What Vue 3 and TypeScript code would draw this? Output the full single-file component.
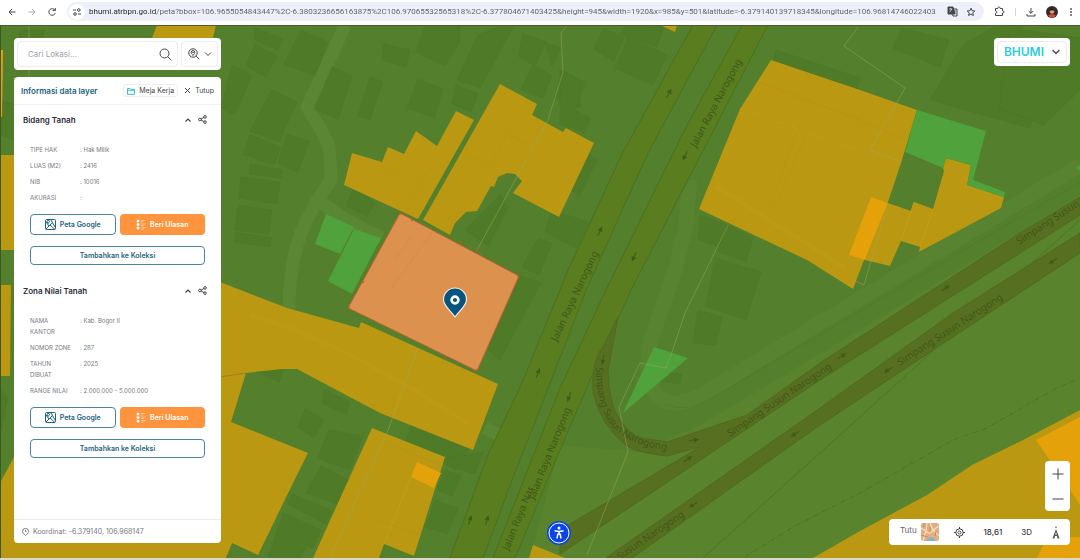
<script setup lang="ts">
import { ref } from 'vue'

interface Field { label: string; value: string }
interface Section { title: string; fields: Field[] }
interface Label { text: string; x: number; y: number; angle: number; anchor: 'start' | 'end' }

const address = ref('bhumi.atrbpn.go.id/peta?bbox=106.9655054843447%2C-6.3803236656163875%2C106.97065532565318%2C-6.377804671403425&height=945&width=1920&x=985&y=501&latitude=-6.379140139718345&longitude=106.96814746022403')
const query = ref('')

const sections: Section[] = [
  {
    title: 'Bidang Tanah',
    fields: [
      { label: 'TIPE HAK', value: 'Hak Milik' },
      { label: 'LUAS (M2)', value: '2416' },
      { label: 'NIB', value: '10016' },
      { label: 'AKURASI', value: '' },
    ],
  },
  {
    title: 'Zona Nilai Tanah',
    fields: [
      { label: 'NAMA KANTOR', value: 'Kab. Bogor II' },
      { label: 'NOMOR ZONE', value: '287' },
      { label: 'TAHUN DIBUAT', value: '2025' },
      { label: 'RANGE NILAI', value: '2.000.000 - 5.000.000' },
    ],
  },
]

const buildings: string[] = [
  '256,28 283,39 278,50 254,39', '255,44 277,56 266,77 246,66', '301,30 328,42 315,76 284,64',
  '232,65 252,75 235,115 221,108', '272,90 297,102 279,142 250,131', '250,135 281,147 274,165 243,154',
  '287,134 309,141 298,172 278,163', '250,164 283,170 281,178 249,174', '241,177 280,182 277,204 239,198',
  '238,205 272,210 269,234 235,230', '236,232 272,238 270,247 235,242', '332,67 352,76 338,119 314,109',
  '370,77 383,82 370,120 358,116', '384,44 410,50 406,67 382,60', '425,25 460,25 460,42 445,66 416,52',
  '418,79 443,89 434,118 407,108', '478,35 503,25 514,25 480,88 457,80', '456,85 478,94 471,112 452,104',
  '523,34 546,42 535,66 518,56', '533,65 552,75 543,98 521,89', '545,42 561,48 552,66', '562,70 580,80 580,108 555,98',
  '603,28 624,38 614,61 594,49', '628,37 667,55 653,85 615,68', '626,25 664,25 657,47 620,34',
  '560,70 585,82 575,110 590,118 585,133 560,124', '587,153 597,160 579,197 572,190',
  '552,210 588,222 577,248 545,232', '538,238 552,243 539,275 522,267', '519,276 541,282 500,360 488,350',
  '355,185 375,204 367,216 346,206', '500,195 508,207 488,246 465,230', '776,50 860,78 857,90 773,60',
  '902,28 949,40 940,67 893,48', '962,46 997,25 1023,25 1008,60 1048,72 1030,128 930,100',
  '1010,28 1080,38 1080,90 1044,125 999,108', '700,215 727,225 720,247 698,240', '727,225 753,238 746,262 717,251',
  '715,258 761,272 746,320 706,306', '698,310 722,317 716,345 693,343', '255,355 285,365 279,382 253,370',
  '325,390 350,402 346,414 322,403', '305,409 324,420 314,438 298,427', '329,430 363,436 350,470 317,458',
  '321,466 349,480 337,504 306,493', '292,494 331,510 326,524 288,504', '283,513 321,530 313,548 276,535',
  '276,535 306,548 300,557 268,557', '411,425 470,447 456,470 405,443', '448,458 483,452 475,474 447,465',
  '445,470 461,476 452,496 437,490', '435,500 458,508 447,534 426,527', '645,370 682,374 680,384 650,380',
  '20,30 45,30 35,60 15,60', '1,100 14,105 14,140 1,135', '1,390 8,398 1,430',
]

const gold: string[] = [
  '157,25 216,25 213,38 152,38', '1,155 15,155 15,250 1,250', '1,285 11,285 10,376 1,376',
  '352,153 382,162 388,147 404,154 416,131 437,146 456,111 474,120 418,219 344,185',
  '500,84 537,104 532,115 563,132 566,128 594,143 559,217 513,193 522,181 515,174 507,173 498,177 494,187 491,186 477,211 466,212 455,223 450,235 423,220',
  '220,282 287,308 359,328 361,322 498,384 473,450 380,413 297,369 282,369 246,373 231,422 308,453 293,483 258,555 232,543 226,558 0,558 0,483 15,455 60,380 210,280',
  '372,428 445,457 414,556 384,544 379,558 313,558', '533,545 565,558 529,558',
  '771,60 860,90 917,110 901,163 888,202 864,260 853,289 807,260 699,209 740,109',
  '888,203 911,211 914,202 933,209 944,171 943,168 946,158 971,165 967,185 1004,197 1001,208 919,252 920,247 901,241 890,266 865,260',
  '660,25 677,25 675,32', '1080,410 1023,440 972,465 927,495 860,531 813,558 1080,558',
]
const orange: string[] = [
  '417,462 441,473 434,488 411,477', '871,197 888,203 865,260 849,255',
  '1080,417 1036,440 1072,493 1080,505', '1047,537 1080,537 1080,558 1037,558', '1,50 3,50 2,117 1,117',
]
const green: string[] = [
  '326,214 354,227 340,254 315,244', '354,229 381,238 352,294 328,281',
  '917,110 986,131 973,180 1005,192 1004,197 967,185 971,165 946,158 943,168 905,152',
  '654,347 688,358 623,413', '1080,165 1080,170 1076,168',
]

const labels: Label[] = [
  { text: 'Jalan Raya Narogong', x: 696, y: 148, angle: -62, anchor: 'start' },
  { text: 'Jalan Raya Narogong', x: 557, y: 342, angle: -65, anchor: 'start' },
  { text: 'Jalan Raya Narogong', x: 571, y: 409, angle: -68, anchor: 'end' },
  { text: 'Jalan Raya Nar', x: 534, y: 488, angle: -68, anchor: 'end' },
  { text: 'Simpang Susun Narogong', x: 730, y: 437, angle: -34, anchor: 'start' },
  { text: 'Simpang Susun Narogong', x: 900, y: 366, angle: -33, anchor: 'start' },
  { text: 'Simpang Susun', x: 1019, y: 245, angle: -33, anchor: 'start' },
  { text: 'Susun Narogong', x: 685, y: 516, angle: -34, anchor: 'end' },
]

const arrows: [number, number, number][] = [
  [669, 93, -62], [685, 156, 118], [600, 231, -66], [634, 257, 116], [538, 373, -68], [569, 397, 110],
  [470, 520, -72], [487, 520, -72], [603, 360, 100], [694, 440, -5], [688, 459, -33], [795, 434, 147],
  [693, 505, 147], [842, 356, -33], [888, 370, 147], [946, 288, -33], [1053, 261, 147],
]
</script>

<template>
  <div class="page">
    <header class="browser">
      <button class="chrome-btn" aria-label="Back"><svg width="10" height="10" viewBox="0 0 10 10"><path d="M8.500 5H2M5 2 2 5l3 3" /></svg></button>
      <button class="chrome-btn faded" aria-label="Forward"><svg width="10" height="10" viewBox="0 0 10 10"><path d="M1.500 5H8M5 2l3 3-3 3" /></svg></button>
      <button class="chrome-btn" aria-label="Reload"><svg width="10" height="10" viewBox="0 0 10 10"><path d="M8 3.300A3.300 3.300 0 1 0 8.300 6M8.300 1v2.600H5.700" /></svg></button>
      <div class="address">
        <button class="site-info" aria-label="Site information"><svg width="10" height="10" viewBox="0 0 10 10"><path d="M1 3h3M6 7h3" /><circle cx="6.800" cy="3" r="1.300" /><circle cx="3" cy="7" r="1.300" /></svg></button>
        <input v-model="address" class="url" aria-label="Address" spellcheck="false" />
        <button class="chrome-btn" aria-label="Translate"><svg width="11" height="11" viewBox="0 0 11 11"><path d="M1 1h5l2 7H1z" fill="#44474a" /><path d="M6 3h4v7H6L5 8" /><path d="M2.200 3h3M3.700 2.300V3M2.400 6Q4 5 4.600 3" stroke="#fff" stroke-width=".7" /><path d="M6.500 5h3M8 4.500c0 1-1 3-1.500 3.500M7.500 6l1.700 2" stroke-width=".6" /></svg></button>
        <button class="chrome-btn" aria-label="Bookmark"><svg width="10" height="10" viewBox="0 0 10 10"><path d="m5 1.200 1.100 2.500 2.700.3-2 1.800.6 2.700L5 7.100 2.600 8.500l.6-2.700-2-1.800 2.700-.3z" /></svg></button>
      </div>
      <div class="browser-tools">
        <button class="chrome-btn" aria-label="Extensions"><svg width="11" height="11" viewBox="0 0 11 11"><path d="M1.500 2.500h2.300c0-2 2.400-2 2.400 0h2.300v2.300c2 0 2 2.200 0 2.200v2.500h-7V7.400c1.700 0 1.700-2.400 0-2.400z" /></svg></button>
        <span class="divider"></span>
        <button class="chrome-btn" aria-label="Downloads"><svg width="10" height="10" viewBox="0 0 10 10"><path d="M5 1v5.200M2.700 4 5 6.300 7.300 4M1 7v2h8V7" /></svg></button>
        <button class="chrome-btn" aria-label="Profile"><svg width="12" height="12" viewBox="0 0 12 12"><g stroke="none"><circle cx="6" cy="6" r="6" fill="#382a2b" /><path d="M2 9.500Q6 6.500 10 9.500Q6 14 2 9.500" fill="#d8443a" /><circle cx="6" cy="5.400" r="2.300" fill="#d69b79" /><path d="M3.500 5Q4 2 6 2.500T8.500 5Q6 3.500 3.500 5" fill="#1d1718" /></g></svg></button>
        <button class="chrome-btn" aria-label="Menu"><svg width="6" height="10" viewBox="0 0 6 10"><g fill="#44474a" stroke="none"><circle cx="3" cy="2" r=".9" /><circle cx="3" cy="5" r=".9" /><circle cx="3" cy="8" r=".9" /></g></svg></button>
      </div>
    </header>

    <main class="stage">
      <svg class="map" viewBox="0 26 1080 532" preserveAspectRatio="xMidYMid slice" role="img" aria-label="Peta bidang tanah">
        <rect x="0" y="25" width="1080" height="533" fill="#547f2c" />
        <path d="M530 558 560 445 640 452 700 425 860 330 1080 195V558z" fill="#59842d" />
        <path d="M345 25Q325 70 307 107Q327 138 329 148Q332 177 330 182Q303 218 295 253Q289 280 289 310M316 198Q345 222 382 238" class="street" />
        <path d="M690 180 685 230 675 270 651 340Q640 385 663 401Q680 408 705 393L1080 165" class="street wide-street" />
        <path d="M485 428l20 10" class="street" />
        <polygon v-for="b in buildings" :key="b" :points="b" class="building" />
        <path d="M665 404Q688 414 712 398L1080 182" fill="none" stroke="#4e7928" opacity=".6" />

        <g class="road">
          <path d="M693 25 717 25 648 153 587 288 537 417 517 467 483 558 450 558 487 457 522 383 568 270 623 152z" />
          <path d="M742 25 768 25 707 143 632 288 593 373 560 450 515 558 493 558 560 388 607 288 683 133z" />
        </g>
        <g class="toll">
          <path d="M618 317 608 370Q609 401 617 415 628 434 642 438L667 442 747 415 820 363 1020 233 1080 197V215L820 380 560 554V530L700 447 667 456Q638 453 627 446 600 425 593 392 591 360 604 345z" />
          <path d="M606 558 820 408 953 313 1080 233V253L820 425 632 558z" />
        </g>
        <path d="M703 558 820 453 953 333 1080 220" fill="none" stroke="#4c7425" stroke-width="1" />
        <path d="M745 557 793 527 860 493 918 460 953 440 987 428 1053 390 1080 378" fill="none" stroke="#4a7222" stroke-dasharray="5 2 1 2" />

        <polygon v-for="p in gold" :key="p" :points="p" fill="#ba9812" />
        <polygon v-for="p in orange" :key="p" :points="p" fill="#e4a10a" />
        <polygon v-for="p in green" :key="p" :points="p" fill="#4fa23c" />
        <g fill="none" stroke="#a98d15" opacity=".3">
          <path d="M759 82 860 120 905 140M800 125 775 190M806 136 774 208M740 109 860 150M380 163 400 178M409 202 430 168M465 155l25 10 17-30 20 8M380 440 445 467M378 520 420 535" />
        </g>
        <path d="M715 186 845 268M250 315Q340 340 470 425" fill="none" stroke="#c29f1e" stroke-width="5" opacity=".35" />
        <path d="M220 377 246 373" fill="none" stroke="#9b8217" />
        <path d="M411 477 384 544M740 109 860 150M914 202 901 241M933 209 920 247" fill="none" stroke="#c9a01a" opacity=".7" />
        <g class="walls">
          <path d="M567 25 561 33 563 72 548 120 477 250M417 350 387 433 330 557M728 225 685 313 672 352 666 368 640 363 619 407 628 452 587 555M858 27 844 46 905 88 870 150 902 162M888 203 864 285 855 281M29 25V80" />
        </g>

        <polygon points="400,213 519,276 477,371 348,308" fill="#dc914f" stroke="#b9622b" stroke-width="1" />
        <path d="M432 232 390 290M412 235 395 260" stroke="#d78c4b" />
        <g fill="#d84c25"><circle v-for="[x, y] in [[400,214],[412,220],[461,242],[477,250],[518,276],[445,358],[477,370],[349,308],[363,282]]" :key="`${x}-${y}`" :cx="x" :cy="y" r="1" /></g>

        <g class="road-labels">
          <text v-for="(l, i) in labels" :key="i" :transform="`translate(${l.x} ${l.y}) rotate(${l.angle})`" :text-anchor="l.anchor">{{ l.text }}</text>
          <path id="ramp" d="M596 367Q596 409 615 430Q635 449 690 453" fill="none" />
          <text><textPath href="#ramp">Simpang Susun Narogong</textPath></text>
        </g>
        <g v-for="[x, y, a] in arrows" :key="`${x}-${y}`" :transform="`translate(${x} ${y}) rotate(${a})`">
          <path d="M-5 0H2" stroke="#3f5b18" /><path d="M0-2.500 5 0 0 2.500z" fill="#3f5b18" />
        </g>

        <path d="M455 317C450 310 443.500 306 443.500 299.500a11.500 11.500 0 0 1 23 0C466.500 306 460 310 455 317z" fill="#07547f" stroke="#f4ece4" stroke-width="1.200" />
        <circle cx="455" cy="300" r="3.400" fill="#07547f" stroke="#fff" stroke-width="2.600" />
        <path d="M.5 25V558" stroke="#3c5a20" />
      </svg>

      <aside class="side">
        <form class="search card" @submit.prevent>
          <div class="search-field">
            <input v-model="query" placeholder="Cari Lokasi..." aria-label="Cari Lokasi" />
            <button aria-label="Cari"><svg width="13" height="13" viewBox="0 0 13 13"><circle cx="5.500" cy="5.500" r="4.500" /><path d="m9 9 3.300 3.300" /></svg></button>
          </div>
          <button class="search-mode" type="button" aria-label="Mode pencarian">
            <svg width="12" height="12" viewBox="0 0 12 12"><circle cx="5" cy="5" r="4.200" /><path d="m8.200 8.200 3 3M5 7.500C4 6 3.200 5.500 3.200 4.400a1.800 1.800 0 0 1 3.600 0C6.800 5.500 6 6 5 7.500z" /><circle cx="5" cy="4.400" r=".4" /></svg>
            <svg width="8" height="8" viewBox="0 0 8 8"><path d="m1 2.500 3 3 3-3" /></svg>
          </button>
        </form>

        <section class="info card">
          <header class="info-head">
            <h1>Informasi data layer</h1>
            <button class="desk"><svg width="8" height="8" viewBox="0 0 8 8"><path d="M.5 1.500h2.500l.7.800H7.500v5h-7zM.5 3.300h7" stroke="#35bfcb" /></svg>Meja Kerja</button>
            <button class="close"><svg width="7" height="7" viewBox="0 0 7 7"><path d="m1 1 5 5M6 1 1 6" /></svg>Tutup</button>
          </header>
          <div class="info-body">
            <section v-for="s in sections" :key="s.title" class="block">
              <div class="block-head">
                <h2>{{ s.title }}</h2>
                <button aria-label="Ciutkan"><svg width="8" height="8" viewBox="0 0 8 8"><path d="m1.500 5.500 2.500-2.500 2.500 2.500" stroke-width="1.200" /></svg></button>
                <button aria-label="Bagikan"><svg width="9" height="9" viewBox="0 0 9 9"><circle cx="1.900" cy="4.500" r="1.300" /><circle cx="7" cy="1.900" r="1.300" /><circle cx="7" cy="7.100" r="1.300" /><path d="M3 4 5.900 2.500M3 5l2.900 1.500" /></svg></button>
              </div>
              <dl>
                <div v-for="f in s.fields" :key="f.label" class="field">
                  <dt>{{ f.label }}</dt><dd>: {{ f.value }}</dd>
                </div>
              </dl>
              <div class="actions">
                <button class="outline"><svg width="11" height="11" viewBox="0 0 11 11"><rect x=".5" y=".5" width="10" height="10" rx="1" /><path d="m1 10 7-7M5 6l5 4.500M1 3l3 4M6 1l4 7M3.200 1v1M2 2.500C2 1 4.500 1 4.500 2.500L3.200 4.500z" /></svg>Peta Google</button>
                <button class="solid"><svg width="10" height="11" viewBox="0 0 10 11"><g fill="#fff" stroke="none"><circle cx="2" cy="2" r="1.500" /><circle cx="2" cy="5.500" r="1.500" /><circle cx="2" cy="9" r="1.500" /></g><path d="M5 1.500h4M5 3h2.500M5 5h5M5 6.500h3M5 8.500h5M5 10h3" stroke="#ffe0bd" stroke-width=".6" /></svg>Beri Ulasan</button>
                <button class="outline wide">Tambahkan ke Koleksi</button>
              </div>
            </section>
          </div>
          <footer class="coords">
            <svg width="7" height="8" viewBox="0 0 7 8"><path d="M3.500 7.300C1.500 6 .5 5 .5 3.400a3 3 0 0 1 6 0C6.500 5 5.500 6 3.500 7.300z" /><path d="M3.500 2v1.700h1" /></svg>
            Koordinat: -6.379140, 106.968147
          </footer>
        </section>
      </aside>

      <button class="brand card" aria-label="BHUMI menu">
        <span class="brand-inner"><span class="logo">BHUMI</span><svg width="10" height="8" viewBox="0 0 10 8"><path d="m1.500 2 3.500 3.500L8.500 2" stroke-width="1.300" /></svg></span>
      </button>

      <button class="access" aria-label="Aksesibilitas">
        <svg width="24" height="24" viewBox="0 0 24 24"><circle cx="12" cy="12" r="12" fill="#0a45e8" stroke="none" /><circle cx="12" cy="12" r="10" stroke="#fff" stroke-width="1" /><circle cx="12" cy="7" r="1.500" fill="#fff" stroke="none" /><path d="M7.500 9.700 12 10.400l4.500-.7M12 10.400v3M10 17.500l.8-4.300h2.400L14 17.500" stroke="#fff" stroke-width="1.500" /></svg>
      </button>

      <div class="zoom card">
        <button aria-label="Perbesar"><svg width="12" height="12" viewBox="0 0 12 12"><path d="M6 .5v11M.5 6h11" /></svg></button>
        <button aria-label="Perkecil"><svg width="12" height="12" viewBox="0 0 12 12"><path d="M.5 6h11" /></svg></button>
      </div>

      <div class="tools card">
        <button class="tutu"><span>Tutu</span>
          <svg width="18" height="18" viewBox="0 0 18 18"><rect width="18" height="18" rx="2" fill="#e2ae82" stroke="none" /><path d="M5 18Q10 10 15 18z" fill="#86b5c0" stroke="none" /><path d="M0 5 5 8 6 0M5 8 2 18M18 3 12 7 9 0M12 7l6 6M5 8Q9 13 12 7" stroke="#f4dfc5" stroke-width="1.200" /><path d="M3 0v4M9 4v5M15 8l-1 5M0 12l7 2" stroke="#c97f55" stroke-width=".9" /></svg>
        </button>
        <button aria-label="Lokasi saya"><svg width="11" height="11" viewBox="0 0 11 11"><circle cx="5.500" cy="5.500" r="3.700" /><circle cx="5.500" cy="5.500" r="1.500" /><path d="M5.500 0v2M5.500 9v2M0 5.500h2M9 5.500h2" /></svg></button>
        <output class="level">18,61</output>
        <button>3D</button>
        <button aria-label="Utara"><svg width="10" height="13" viewBox="0 0 10 13"><path d="M5 0 6 2H4z" fill="#c44" stroke="none" /><path d="m5 3 3.500 9.500H6.500L6 10H4l-.5 2.500h-2z" fill="#555" stroke="none" /><path d="m5 6 .8 2.500H4.200z" fill="#fff" stroke="none" /></svg></button>
      </div>
    </main>
  </div>
</template>

<style>
body { margin: 0; }
</style>

<style scoped>
.page { height: 100vh; display: flex; flex-direction: column; background: #d9d8c9; font-family: Inter, "Liberation Sans", sans-serif; color: #444; }
button { border: 0; padding: 0; margin: 0; background: none; font: inherit; color: inherit; display: flex; align-items: center; justify-content: center; cursor: pointer; }
svg { fill: none; stroke: currentColor; stroke-width: 1; flex: none; }
h1, h2, dl, dd { margin: 0; }

.browser { display: flex; align-items: center; height: 26px; flex: none; padding: 0 6px 2px 7px; background: #fff; color: #44474a; border-bottom: 1px solid #4b5c35; box-sizing: border-box; gap: 10px; }
.browser .chrome-btn { flex: none; }
.browser .faded { color: #aaadb0; }
.address { flex: 1; display: flex; align-items: center; gap: 8px; height: 19px; border-radius: 10px; background: #edf0f9; padding: 0 8px 0 2px; min-width: 0; }
.address .site-info { width: 16px; height: 16px; border-radius: 8px; background: #fff; flex: none; }
.url { flex: 1; min-width: 0; border: 0; outline: 0; padding: 0; margin-left: -4px; margin-right: -4px; font: 8px Roboto, sans-serif; color: transparent; background: linear-gradient(90deg, #202124 68px, #5a5d63 68px); background-clip: text; -webkit-background-clip: text; }
.browser-tools { display: flex; align-items: center; gap: 10px; }
.divider { width: 1px; height: 8px; background: #cfd8ee; }

.stage { position: relative; flex: 1; min-height: 0; margin-bottom: 2px; overflow: hidden; }
.map { display: block; width: 100%; height: 100%; stroke: none; }
.street { fill: none; stroke: #5b8634; stroke-width: 13; }
.wide-street { stroke-width: 15; opacity: .6; }
.building { fill: #4f7a28; stroke: #4a7525; stroke-width: 1; stroke-opacity: .5; opacity: .8; }
.road path { fill: #597d1f; stroke: #4b711c; }
.toll path { fill: #576f20; stroke: #506a20; }
.walls path { fill: none; stroke: #9eab66; opacity: .45; }
.road-labels { font: 10px "Noto Sans", sans-serif; fill: #3f581a; }

.card { background: #fff; border-radius: 4px; box-sizing: border-box; }
.side { position: absolute; left: 14px; top: 12px; bottom: 15px; width: 207px; display: flex; flex-direction: column; gap: 7px; }
.search { display: flex; gap: 3px; padding: 3px; height: 32px; flex: none; }
.search-field, .search .search-mode { border: 1px solid #ececee; border-radius: 4px; }
.search-field { flex: 1; display: flex; align-items: center; padding: 0 5px 0 10px; min-width: 0; color: #444; }
.search-field input { flex: 1; min-width: 0; border: 0; outline: 0; padding: 0; font: 8px Inter, sans-serif; }
.search-field input::placeholder { color: #a1a1a8; }
.search-mode { width: 37px; gap: 4px; }
.info { flex: 1; min-height: 0; display: flex; flex-direction: column; }
.info-head { display: flex; align-items: center; height: 28px; padding: 0 7px; border-bottom: 1px solid #f2f2f3; box-sizing: border-box; flex: none; }
.info-head h1 { flex: 1; font-size: 8px; font-weight: 600; color: #176381; white-space: nowrap; }
.info-head button { font-size: 7px; gap: 4px; white-space: nowrap; }
.info-head .desk { border: 1px solid #eeeeef; border-radius: 3px; height: 13px; padding: 0 3px; }
.info-head .close { margin-left: 6px; }
.info-body { flex: 1; min-height: 0; overflow: hidden; }
.block { padding: 0 14px 11px 9px; }
.block-head { display: flex; align-items: center; gap: 6px; height: 29px; }
.block-head h2 { flex: 1; font-size: 8px; font-weight: 600; color: #2b2c3c; }
.block dl { display: flex; flex-direction: column; gap: 5px; padding: 10px 0 11px 7px; }
.field { display: flex; gap: 8px; font-size: 6px; line-height: 11px; color: #777981; min-height: 11px; }
.field dt { width: 42px; }
.field dd { flex: 1; white-space: nowrap; }
.actions { display: grid; grid-template-columns: 1fr 1fr; gap: 11px 4px; padding: 0 2px 0 7px; }
.actions button { height: 21px; border-radius: 4px; font-size: 7px; font-weight: 600; gap: 4px; box-sizing: border-box; white-space: nowrap; }
.actions .outline { border: 1px solid #4b829c; color: #1c6382; }
.actions .solid { background: #ff943e; color: #fff; }
.actions .wide { grid-column: 1 / -1; height: 19px; }
.coords { height: 24px; flex: none; display: flex; align-items: center; gap: 4px; padding: 0 8px; border-top: 1px solid #ececee; font-size: 7px; color: #777981; box-sizing: border-box; }

.stage .brand { position: absolute; right: 10px; top: 12px; padding: 3px; height: 28px; background: #fff; }
.brand-inner { display: flex; align-items: center; gap: 7px; height: 22px; padding: 0 5px 0 6px; border: 1px solid #ececee; border-radius: 4px; box-sizing: border-box; }
.logo { font-size: 12px; font-weight: 600; line-height: 14px; color: #2ccddd; }
.access { position: absolute; left: 50%; margin-left: 7px; bottom: 13px; }
.zoom { position: absolute; right: 10px; bottom: 47px; width: 25px; height: 50px; display: grid; grid-template-rows: 1fr 1fr; }
.tools { position: absolute; right: 10px; bottom: 13px; width: 181px; height: 26px; display: flex; align-items: center; justify-content: space-between; padding: 0 9px 0 11px; font-size: 8px; font-weight: 500; }
.tools .tutu { gap: 4px; color: #666; font-weight: 400; margin-right: -4px; }
.tutu span { padding-bottom: 5px; }
.level { color: #333; }
</style>
